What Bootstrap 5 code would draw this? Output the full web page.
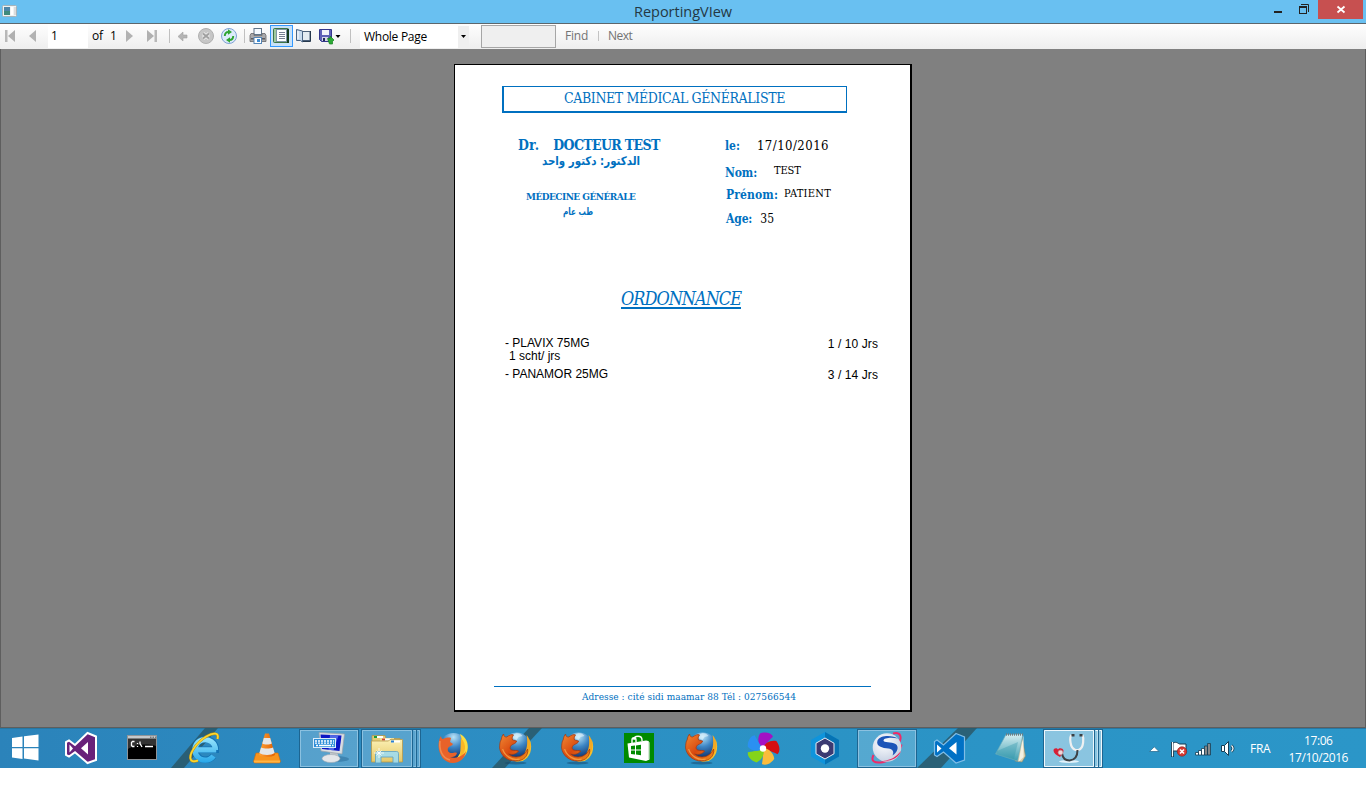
<!DOCTYPE html>
<html lang="fr">
<head>
<meta charset="utf-8">
<title>ReportingVIew</title>
<link href="https://cdn.jsdelivr.net/npm/bootstrap@5.3.0/dist/css/bootstrap.min.css" rel="stylesheet">
<script src="https://cdn.jsdelivr.net/npm/bootstrap@5.3.0/dist/js/bootstrap.bundle.min.js" defer></script>
<style>
body{width:1366px;height:800px;overflow:hidden;background:#fff;font-family:"Open Sans","Noto Sans",sans-serif;font-size:12px;line-height:16px;color:#000}
svg{display:block;flex:none}
.ln{display:block;white-space:pre;line-height:16px}
.titlebar{height:23px;background:#69c0f1;color:#243844}
.titlebar .caption{font-size:14.5px;line-height:23px;letter-spacing:-.02px}
.toolstrip{height:26px;border-top:1px solid #5c666c;background:linear-gradient(#fefefe,#eeeeee)}
.toolstrip .gone{color:#737373;margin-left:9px}
.page-no{width:40px;height:24px;padding-left:3px;background:#fff}
.page-of{width:33px;letter-spacing:-.13px}
.zoom-box{width:109px;height:22px;margin-top:2px;background:#fff}
.zoom-box .ln{line-height:22px;letter-spacing:-.27px}
.zoom-box .arrow{width:11px;background:#efefef}
.find-box{width:75px;height:23px;margin:1px 0 0 12px;border:1px solid #a6a6a6;background:#efefef}
.tool-on{width:23px;height:22px;margin-top:1px;border:1px solid #3399ff;background:#c8e1f8}
.vsep{width:1px;height:10px;margin:3px 9px 0 10px;background:#c3c3c3}
.viewer{height:679px;background:#808080;border:1px solid #5e5e5e;border-top:0;padding:15px 0 0 453px}
.sheet{width:458px;height:648px;background:#fff;border:1px solid #000;border-right-width:2px;border-bottom-width:2px;font-family:"DejaVu Serif Condensed","DejaVu Serif",serif}
.blue{color:#0070c0}
.cab{width:345px;height:27px;margin:21px 0 0 47px;border:1px solid #0070c0;border-left-width:2px;border-bottom-width:2px;padding-left:60px;font-size:14px;letter-spacing:-.39px}
.cab .ln{line-height:23px}
.head{height:172px}
.doctor{width:207px;margin-left:63px;padding-top:24px}
.doctor-name{font-size:14px;letter-spacing:-.64px}
.doctor-title{font-size:14px;letter-spacing:.2px;margin-right:14px}
.arabic{font-family:"DejaVu Sans",sans-serif;font-weight:700;direction:rtl;transform-origin:0 50%}
.name-ar{font-size:12px;margin-left:24px;transform:scaleX(.855)}
.spec{font-size:10px;letter-spacing:-.53px;margin:20px 0 0 8px}
.spec-ar{font-size:10px;margin-left:45px;transform:translateY(-1px) scaleX(.725)}
.patient{font-size:12px;padding-top:25px}
.patient .value{font-weight:400}
.date{font-size:13px;letter-spacing:.46px;margin-left:17px}
.row-nom{margin-top:9px;letter-spacing:-.12px}
.row-nom .blue{padding-top:2px}
.row-nom .value{font-size:11px;margin-left:17px}
.row-prenom{margin:5px 0 0 1px;letter-spacing:.12px}
.row-prenom .blue{padding-top:1px}
.row-prenom .value{font-size:11px;margin-left:6px;letter-spacing:.26px}
.row-age{margin:8px 0 0 1px;letter-spacing:-.15px}
.row-age .value{margin-left:8px;letter-spacing:.1px}
.ordo{width:120px;height:24px;margin-left:166px;border-bottom:2px solid #0070c0;font-size:18px;font-style:italic;letter-spacing:-1.02px}
.ordo .ln{line-height:27px}
.rx{font-family:"Liberation Sans",Arial,sans-serif;font-size:12px;margin:28px 32px 0 50px}
.rx .ln{line-height:13px}
.rx .qty{padding-top:1px;letter-spacing:.08px}
.rx-next{margin-top:5px}
.foot{margin:auto 39px 5px 39px;border-top:1px solid #0070c0;padding:2px 0 0 88px;font-size:10px;letter-spacing:.04px}
.taskbar{height:41px;margin-top:-1px;background:linear-gradient(90deg,#2b83ba,#2d8cc2 30%,#2b93c5 60%,#2b96c8);border-top:1px solid #5e5e5e;box-shadow:inset 0 1px #2577a3;color:#fff}
.taskbar svg{overflow:visible;margin-top:1px}
.tray{font-size:12px}
.lang{line-height:42px;margin-left:6px;letter-spacing:-.3px}
.clock{width:60px;margin-left:18px;padding-top:4px;letter-spacing:-.42px}
.clock .ln{line-height:17px}
</style>
</head>
<body>
<header class="titlebar d-flex align-items-start">
  <svg width="634" height="23"><rect x="2.500" y="5.500" width="14" height="11" rx="1" fill="#eef3f3" stroke="#a5b3ba"/><rect x="4" y="7" width="6" height="8" fill="#3f8a7c"/><rect x="4" y="7" width="6" height="4" fill="#4c86a8"/><rect x="11" y="7" width="2" height="8" fill="#fff"/><rect x="14" y="7" width="2" height="8" fill="#dcdcdc"/></svg>
  <span class="caption ln">ReportingVIew</span>
  <svg class="ms-auto" width="98" height="23"><rect x="6" y="11" width="8" height="2" fill="#222"/><path d="M33 4.500H40.500V12" fill="none" stroke="#222"/><rect x="31.500" y="6.500" width="7" height="7" fill="none" stroke="#222"/><rect x="31" y="6" width="8" height="2" fill="#222"/><rect x="50" y="0" width="45" height="19" fill="#c75050"/><path d="M69.500 6.500l7 6m0-6l-7 6" stroke="#fff" stroke-width="1.800"/></svg>
</header>
<nav class="toolstrip d-flex align-items-start">
  <svg width="22" height="25"><rect x="5" y="6" width="2.500" height="12" fill="#b8b8b8"/><path d="M15 6v12l-7-6z" fill="#b0b0b0"/></svg>
  <svg width="26" height="25"><path d="M14 6v12l-7-6z" fill="#b2b2b2"/></svg>
  <div class="page-no pt-1"><span class="ln">1</span></div>
  <div class="page-of d-flex pt-1"><span class="ln ms-1">of</span><span class="ln" style="margin-left:7px">1</span></div>
  <svg width="20" height="25"><path d="M5 6v12l7-6z" fill="#b2b2b2"/></svg>
  <svg width="22" height="25"><path d="M6 6v12l7-6z" fill="#b0b0b0"/><rect x="13.500" y="6" width="2.500" height="12" fill="#b8b8b8"/></svg>
  <svg width="10" height="25"><path d="M6.500 5v14" stroke="#c0c0c0"/></svg>
  <svg width="20" height="25"><path d="M5 12.500l5-4.500v3h4v3h-4v3z" fill="#b4b4b4" stroke="#a3a3a3" stroke-width=".6"/></svg>
  <svg width="24" height="25"><circle cx="13" cy="12" r="7.500" fill="#c6c6c6" stroke="#b0b0b0"/><path d="M10 9.500l6 5m0-5l-6 5" stroke="#e8e8e8" stroke-width="3.600"/><path d="M10 9.500l6 5m0-5l-6 5" stroke="#a0a0a0" stroke-width="1.800"/></svg>
  <svg width="23" height="25"><circle cx="12" cy="12" r="7.500" fill="#dcebfb" stroke="#7fa1d4"/><path d="M7.800 12c0-2.500 1.200-4 3.700-4M16.200 12c0 2.500-1.200 4-3.700 4" fill="none" stroke="#2fa532" stroke-width="1.900"/><path d="M11 5.200v5.600l4-2.800zM13 18.800v-5.600l-4 2.800z" fill="#2fa532"/></svg>
  <svg width="8" height="25"><path d="M4.500 5v14" stroke="#c0c0c0"/></svg>
  <svg width="22" height="25"><rect x="6" y="4.500" width="7.500" height="6" fill="#f5faff" stroke="#60758a"/><path d="M3 9.500h3v2h8v-2h3l1 2v6H2v-6z" fill="#a9a9ab" stroke="#67676b" stroke-width=".8"/><rect x="3" y="14" width="14" height="1.500" fill="#5b5b60"/><rect x="6" y="13.500" width="7.500" height="6" fill="#fff" stroke="#5686b6"/><rect x="9" y="15" width="3" height="3" fill="#3d8dd6"/></svg>
  <div class="tool-on flex-shrink-0"><svg width="21" height="20"><rect x="2" y="2" width="16" height="15" rx="2" fill="#3d7446"/><rect x="3" y="3" width="3" height="13" fill="#a0c9a0"/><rect x="16" y="3" width="2" height="14" fill="#173c1e"/><rect x="5.500" y="3.500" width="10" height="12" fill="#fff" stroke="#7e96a4"/><path d="M8 6.500h6M8 8.500h6M8 10.500h6M8 12.500h6" stroke="#767f92"/></svg></div>
  <svg width="22" height="25"><path d="M9.500 7.500h7.500v9H9.500z" fill="#e4ebf2" stroke="#4a5e78"/><path d="M17.500 7v10.500H9" fill="none" stroke="#26384c"/><path d="M3.500 5.500l6 1.500v11l-2-1.500H3.500z" fill="#c9dbee" stroke="#4a6484"/><path d="M5 7v8" stroke="#fff"/></svg>
  <svg width="35" height="25"><path d="M4.500 5.500h12v12h-10l-2-2z" fill="#5f60b8" stroke="#35388c"/><rect x="7" y="6" width="7" height="5" fill="#f3f3fb"/><rect x="7" y="13" width="6" height="4" fill="#d4d6e8"/><rect x="8" y="14" width="2" height="3" fill="#222a58"/><path d="M12.500 14.500h2.500v-2.500l4 4-1.500 1.500v2.500h-3z" fill="#2caa36" stroke="#167f1e" stroke-width=".7"/><path d="M20.500 11h5l-2.500 3z" fill="#000"/></svg>
  <svg width="10" height="25"><path d="M.5 5v14" stroke="#c0c0c0"/></svg>
  <div class="zoom-box d-flex ps-1"><span class="ln">Whole Page</span><div class="arrow ms-auto"><svg width="11" height="22"><path d="M3 9h5l-2.500 3z"/></svg></div></div>
  <div class="find-box"></div>
  <div class="gone d-flex pt-1"><span class="ln" style="letter-spacing:-.23px">Find</span><i class="vsep"></i><span class="ln" style="letter-spacing:-.55px">Next</span></div>
</nav>
<main class="viewer">
  <article class="sheet d-flex flex-column">
    <div class="cab blue"><span class="ln">CABINET MÉDICAL GÉNÉRALISTE</span></div>
    <section class="head d-flex fw-bold">
      <div class="doctor blue">
        <div class="d-flex"><span class="ln doctor-title">Dr.</span><span class="ln doctor-name">DOCTEUR TEST</span></div>
        <div class="d-flex"><span class="ln arabic name-ar">الدكتور: دكتور واحد</span></div>
        <div class="d-flex"><span class="ln spec">MÉDECINE GÉNÉRALE</span></div>
        <div class="d-flex"><span class="ln arabic spec-ar">طب عام</span></div>
      </div>
      <div class="patient">
        <div class="d-flex"><span class="ln blue">le:</span><span class="ln value date">17/10/2016</span></div>
        <div class="row-nom d-flex align-items-start"><span class="ln blue">Nom:</span><span class="ln value">TEST</span></div>
        <div class="row-prenom d-flex align-items-start"><span class="ln blue">Prénom:</span><span class="ln value">PATIENT</span></div>
        <div class="row-age d-flex"><span class="ln blue">Age:</span><span class="ln value">35</span></div>
      </div>
    </section>
    <div class="ordo blue"><span class="ln">ORDONNANCE</span></div>
    <section class="rx">
      <div class="d-flex justify-content-between"><div><span class="ln">- PLAVIX 75MG</span><span class="ln ms-1">1 scht/ jrs</span></div><span class="ln qty">1 / 10 Jrs</span></div>
      <div class="rx-next d-flex justify-content-between"><span class="ln">- PANAMOR 25MG</span><span class="ln qty">3 / 14 Jrs</span></div>
    </section>
    <div class="foot blue"><span class="ln">Adresse : cité sidi maamar 88 Tél : 027566544</span></div>
  </article>
</main>
<footer class="taskbar d-flex">
  <svg width="0" height="0"><defs>
    <linearGradient id="ieG" gradientUnits="userSpaceOnUse" x1="0" y1="6" x2="0" y2="33"><stop offset="0" stop-color="#a5ecff"/><stop offset="1" stop-color="#2aa9ea"/></linearGradient>
    <linearGradient id="coneG"><stop offset="0" stop-color="#ffa238"/><stop offset="1" stop-color="#e05f00"/></linearGradient>
    <radialGradient id="globeG" cx=".5" cy=".15" r=".8"><stop offset="0" stop-color="#b8e4f8"/><stop offset=".45" stop-color="#3c85c4"/><stop offset="1" stop-color="#0b2a63"/></radialGradient>
    <linearGradient id="foxG" x1="0" y1="0" x2="1" y2="1"><stop offset="0" stop-color="#f08a35"/><stop offset=".5" stop-color="#d9490f"/><stop offset="1" stop-color="#f0901c"/></linearGradient>
    <linearGradient id="noteG" x1="0" y1="0" x2="0" y2="1"><stop offset="0" stop-color="#d7eff2"/><stop offset="1" stop-color="#3a9db0"/></linearGradient>
    <linearGradient id="foldG" x1="0" y1="0" x2="0" y2="1"><stop offset="0" stop-color="#fbf0b4"/><stop offset="1" stop-color="#e5c765"/></linearGradient>
    <radialGradient id="ballG" cx=".4" cy=".35" r=".7"><stop offset="0" stop-color="#fff"/><stop offset="1" stop-color="#c4cfe2"/></radialGradient>
    <g id="btn"><rect x="1.500" y=".5" width="59" height="38" fill="#fff" fill-opacity=".2" stroke="#1d6591"/><rect x="2.500" y="1.500" width="57" height="36" fill="none" stroke="#8bc1e0"/></g>
    <g id="fox" transform="translate(.6 0)">
      <ellipse cx="31" cy="34" rx="11" ry="1.500" fill="#14456b" opacity=".5"/>
      <circle cx="32" cy="17.500" r="14" fill="url(#globeG)"/>
      <path d="M28 6c4-3 8-2 10 1l-4 1-2 3-4-2z" fill="#e6f6fd" opacity=".6"/>
      <path d="M45 10c4 10 0 19-7 22l-8 1c8-3 14-9 15-23z" fill="#f7c02c"/>
      <path d="M42 6c5 6 5 14 1 19l-3-1c3-5 3-12 2-18z" fill="#f3a922"/>
      <path d="M16.500 11C17 8 18 6 19 5c0 2 1 3 3 3 3-2 5-3 7-2-1 1-2 3-1 5l4 1c0 2-3 3-5 4-2 2-2 4 0 5 3 1 5 0 7 1-2 3-6 4-10 3 5 5 15 4 19-5 1 7-4 12-12 12-9 0-15-6-16-13 0-4 .5-7 1.500-8z" fill="url(#foxG)" stroke="#a5350c" stroke-width=".7"/>
      <path d="M18 20c2 7 10 12 17 10" fill="none" stroke="#f6a54b" stroke-width="1.200" opacity=".8"/>
    </g>
  </defs></svg>
  <svg width="50" height="39"><path d="M12 9l10.500-1.500V18H12zM24 7.300L38.500 5.500V18H24zM12 19.300h10.500V30L12 28.500zM24 19.300H38.500V31.500L24 29.500z" fill="#fff"/></svg>
  <svg width="62" height="39"><path d="M37.500 4L46 7.500V31L37.500 34 25 23.300 19 27.500l-3-1.500V13l3-1.500 6 4.500z" fill="#68217a" stroke="#fff" stroke-width="2"/><path d="M38 13v12.500L31 19.300zM19.500 15.500v8l3.500-4z" fill="#fff"/></svg>
  <svg width="62" height="39"><rect x="15.500" y="6.500" width="29" height="24" fill="#000" stroke="#8e9499"/><path d="M16 9h28v8C34 14 22 16 16 20z" fill="#fff" opacity=".2"/><rect x="16" y="7" width="28" height="2.500" fill="#c5c9cc"/><path d="M38 8.200h1.500M40.500 8.200h1.500M43 8.200h1" stroke="#555"/><path d="M22.500 12.500h-2l-1 1v3l1 1h2M25.500 14v1M25.500 17v1M28 12.500v2l2 3.500M33 17.500h8" fill="none" stroke="#fff" stroke-width="1.300"/></svg>
  <svg width="62" height="39"><path d="M-3 39H10L44-1H31z" fill="#2a5868" opacity=".85"/><path d="M22 20.800H41.800A10.300 10.300 0 1 0 39.500 27" fill="none" stroke="#1473b4" stroke-width="6.500"/><path d="M22 20.800H42.200M41.500 21A10.300 10.300 0 1 0 39.500 27" fill="none" stroke="url(#ieG)" stroke-width="5.300"/><path d="M43.500 10c2-7-4-6.500-12-2C22 14 14 26 17 31c1.500 2.500 4 1.500 7 .5" fill="none" stroke="#b78b12" stroke-width="2.600"/><path d="M43.500 10c2-7-4-6.500-12-2C22 14 14 26 17 31c1.500 2.500 4 1.500 7 .5" fill="none" stroke="#fbd62e" stroke-width="1.800"/></svg>
  <svg width="62" height="39"><path d="M20 24h22l2.500 8.500-1 1.500h-25l-1-1.500z" fill="#f8941d" stroke="#d86a00" stroke-width=".6"/><path d="M18 31.500h26v2H18z" fill="#ffb545"/><path d="M29 4.500h4L39 26c-3 2.500-13 2.500-16 0z" fill="url(#coneG)"/><path d="M27.800 9h6.400l1.600 5.500c-2 1.300-7.500 1.300-9.500 0zM25 18.500c3 1.300 9 1.300 12 0l1.600 5.500c-3 2.500-12 2.500-15.200 0z" fill="#e4e6e8"/></svg>
  <svg width="62" height="39"><use href="#btn"/><ellipse cx="38" cy="30" rx="13" ry="3" fill="#1b5b86" opacity=".4"/><path d="M32 23h7l2 6h-9z" fill="#bfc5cb"/><path d="M21 3.500l25.500 1.500-2.500 20-21-3z" fill="#d9dde2" stroke="#9aa3ab" stroke-width=".7"/><path d="M22.500 5.500l21 1-2 15.500L24 20z" fill="#0b16c4"/><path d="M32 6l8.500.4-5 15-5-.6z" fill="#6e8af5" opacity=".7"/><ellipse cx="33" cy="29.500" rx="9" ry="4" fill="#e3e6e9" stroke="#a3abb3" stroke-width=".6"/><rect x="15.500" y="9.500" width="22" height="9" fill="#2f8fd8" stroke="#d9ecfa"/><path d="M17 12h19M17 14.200h19" stroke="#fff" stroke-width="1.300" stroke-dasharray="2 1"/><path d="M18 16.500h2m1 0h12m1 0h1.500" stroke="#fff" stroke-width="1.300"/></svg>
  <svg width="62" height="39"><rect x="1.500" y=".5" width="59" height="38" fill="#fff" fill-opacity=".2" stroke="#1d6591"/><path d="M2.500 1.500h49v36h-49zM53.500 1.500h2.500v36h-2.500M57.500 1.500h2v36h-2" fill="none" stroke="#8bc1e0"/><path d="M52.500 1v37M56.500 1v37" stroke="#1d6591"/><path d="M12 6.500h13l1 3h14v5H12z" fill="#e4cc74" stroke="#ad934a" stroke-width=".7"/><rect x="14" y="7" width="9" height="2" fill="#fff"/><rect x="14" y="7" width="3" height="2" fill="#1a9e38"/><path d="M20 9h14v5H20z" fill="#efdb93"/><rect x="22" y="9.500" width="9" height="2" fill="#fff"/><rect x="22" y="9.500" width="3" height="2" fill="#d2442b"/><path d="M11.500 12h17l1.500-1.500h12.500V33h-31z" fill="url(#foldG)" stroke="#b79b4a" stroke-width=".8"/><rect x="31" y="11.500" width="9" height="2" fill="#fff"/><rect x="31" y="11.500" width="3" height="2" fill="#2b80d0"/><path d="M15.500 34V24.500c0-1 .5-2 2-2h19c1.500 0 2 1 2 2V34h-5.500v-6h-12v6z" fill="#9edcf0" fill-opacity=".9" stroke="#5a9fc2" stroke-width=".8"/><path d="M19 19v10M14 24h10M16.500 21.500l5 5m0-5l-5 5" stroke="#fff" stroke-width=".8"/></svg>
  <svg width="62" height="39"><circle cx="31.500" cy="18" r="14" fill="url(#globeG)"/><path d="M38 5c10 5 11 20 0 26l-8 2c9-5 13-17 8-28z" fill="#fbdc3e"/><path d="M39 9c6 6 5 15-1 20z" fill="#f9b626"/><path d="M16.500 17c0-4 1-8 2.500-10 0 2 1 3 2 3 2-1 6-2 8-1l-1 4 3 2c-1 2-4 2-5 4-1 3 1 5 4 5 2 0 3-1 5 0-1 4-4 4-7 4 7 2 13-1 16-6-1 8-7 12-13 12-9 0-14-8-14.500-17z" fill="#e8622a"/><path d="M18 12c-1 9 2 17 10 19" fill="none" stroke="#f08a4e" stroke-width="1.500"/></svg>
  <svg width="62" height="39"><path d="M8 39H21L58-1H45z" fill="#2a5868" opacity=".85"/><use href="#fox"/></svg>
  <svg width="62" height="39"><use href="#fox"/></svg>
  <svg width="62" height="39"><rect x="16" y="4" width="30" height="30" fill="#008a00"/><path d="M19.500 14.500L38 11.500q3 0 3.500 2v17l-3.500 1.500L21 28.500z" fill="#fff"/><path d="M40.500 13v17" stroke="#d5ead5"/><path d="M24 14v-3c0-3 4-3 4 0v2M26 11c0-5 8-5 8 0v1" fill="none" stroke="#fff" stroke-width="1.400"/><path d="M23 17l4-.5v4h-4zM28 16.400l5-.6v4.700h-5zM23 21.500h4V25.500l-4-.6zM28 21.500h5v4.800l-5-.7z" fill="#008a00"/></svg>
  <svg width="62" height="39"><use href="#fox"/></svg>
  <svg width="62" height="39"><g transform="translate(31 19.500)"><path d="M0 0C-5-3-6-10-3-15c5-2 11-1 13 3C7-9 4-6 0 0z" fill="#a411c4"/><path d="M0 0C-5-3-6-10-3-15c5-2 11-1 13 3C7-9 4-6 0 0z" fill="#d60f10" transform="rotate(72)"/><path d="M0 0C-5-3-6-10-3-15c5-2 11-1 13 3C7-9 4-6 0 0z" fill="#fbbc3c" transform="rotate(144)"/><path d="M0 0C-5-3-6-10-3-15c5-2 11-1 13 3C7-9 4-6 0 0z" fill="#84d41a" transform="rotate(216)"/><path d="M0 0C-5-3-6-10-3-15c5-2 11-1 13 3C7-9 4-6 0 0z" fill="#2a90f2" transform="rotate(288)"/><circle r="3.200" fill="#fff"/></g></svg>
  <svg width="62" height="39"><path d="M31 3l14 8v16.500l-14 8-14-8V11z" fill="#0f94dc"/><path d="M31 3l14 8v16.500l-14 8z" fill="#0673b4"/><path d="M31 9l9 5.200v10.600L31 30l-9-5.200V14.200z" fill="#3b3a72" stroke="#e8eef5" stroke-width="1"/><circle cx="31" cy="19.500" r="4.200" fill="#fff"/></svg>
  <svg width="62" height="39"><use href="#btn"/><path d="M37 4.500c8-2 9 4 6 9M17.500 26c-3 6 1 8 7 7.500 11-1 19-9 21-18" fill="none" stroke="#ef2a68" stroke-width="2"/><circle cx="31" cy="18.500" r="14.300" fill="url(#ballG)"/><path d="M42 9.500c-5-3.500-18-4-20.500 2-2 6 5 7.500 11 8 4 .5 6 3 4 7 5-3 7-9 3-11.500-4-2.500-12-1-12-3.500 0-3 9-3.500 14.500-2z" fill="#1d55b8"/><path d="M45 22c-2 6-9 10.500-18 10 8-1 13-4 18-10z" fill="#e92660"/></svg>
  <svg width="62" height="39"><path d="M-1 39H23L59-1H40z" fill="#2a5868" opacity=".85"/><path d="M38 4.500l8.500 3.500v23L38 34 25.500 23l-6.500 4.500-2.500-1.500V12.500l2.500-1.500 6.500 5z" fill="#0071c5" stroke="#7fbde6" stroke-width="1.200"/><path d="M38.500 13v12.500L31 19.300zM19 15.500v8l4.500-4z" fill="#fff"/></svg>
  <svg width="62" height="39"><path d="M42 8l3.500 19-3.500 6-7-1z" fill="#d8cfae" stroke="#8c8a6b" stroke-width=".6"/><path d="M43.500 6v22l-5 5z" fill="#f4f1e2"/><path d="M26 5.500l17-.5-5.500 27L15.500 25z" fill="url(#noteG)" stroke="#67a9b8" stroke-width=".6"/><path d="M17 22l21-9-4 17-17.500-5z" fill="#2c91a8" opacity=".35"/><path d="M26 5.500h17" stroke="#6d7d84" stroke-width="2.500" stroke-dasharray="1 1"/></svg>
  <svg width="62" height="39"><rect x="1.500" y=".5" width="59" height="38" fill="#fff" fill-opacity=".45" stroke="#1d6591"/><path d="M2.500 1.500h49v36h-49zM53.500 1.500h2.500v36h-2.500M57.500 1.500h2v36h-2" fill="none" stroke="#eef7fc"/><path d="M52.500 1v37M56.500 1v37" stroke="#1d6591"/><ellipse cx="27" cy="32.500" rx="10" ry="1.500" fill="#e3f2fa"/><path d="M29.500 6c-2 2-2 13 4 15h3c6-2 5-13 4-15" fill="none" stroke="#eef0f1" stroke-width="2.200"/><path d="M29.500 6.200h3M37.500 6.200h3" stroke="#3a3f43" stroke-width="2.600"/><path d="M35.500 21c0 5-2 10-8 10.500-6 0-7-4-7.500-7" fill="none" stroke="#3e4144" stroke-width="2"/><path d="M18 28c-4-2-6.500-4-6.500-6.500 0-2.500 3.500-3 4.500-1 1-2 5-1.500 5.500 1 0 3-1.500 4-3.500 6.500z" fill="#d81f35"/><circle cx="18.500" cy="23.500" r="2.300" fill="#f1d5d8" stroke="#b9a4a8" stroke-width=".7"/></svg>
  <div class="tray d-flex">
    <svg width="140" height="39"><path d="M45.500 22.500h9.500l-4.700-4.700z" fill="#fff" stroke="#2a6f94" stroke-width=".8"/>
      <path d="M68.500 13v15" stroke="#12394f" stroke-width="3"/><path d="M69 14c4-2 5 1 7 1h6v8c-4 1-7-1-9-1h-4z" fill="#fff" stroke="#12394f"/><path d="M68.500 13v14.500" stroke="#fff" stroke-width="1.200"/><circle cx="78" cy="22.500" r="4.700" fill="#d83a32" stroke="#8f2420" stroke-width=".7"/><path d="M76 20.500l4 4m0-4l-4 4" stroke="#fff" stroke-width="1.600"/>
      <g stroke="#173f55" stroke-width=".8"><path d="M91.500 23.500h3v2.500h-3zM94.500 21.500h3v4.500h-3zM97.500 19.500h3v6.500h-3z" fill="#fff"/><path d="M100.500 17h3v9h-3zM103.500 14.500h3v11.500h-3z" fill="#85898c"/></g>
      <path d="M117.500 16.500h3l4-4v14l-4-4h-3z" fill="#fff" stroke="#173f55"/><path d="M120.500 16.500v6" stroke="#173f55"/><path d="M127.500 16.500q3 3 0 6" fill="none" stroke="#173f55" stroke-width="2.800"/><path d="M127.500 16.500q3 3 0 6" fill="none" stroke="#fff" stroke-width="1.200"/></svg>
    <span class="lang">FRA</span>
    <div class="clock text-center"><span class="ln">17:06</span><span class="ln">17/10/2016</span></div>
  </div>
</footer>
</body>
</html>
